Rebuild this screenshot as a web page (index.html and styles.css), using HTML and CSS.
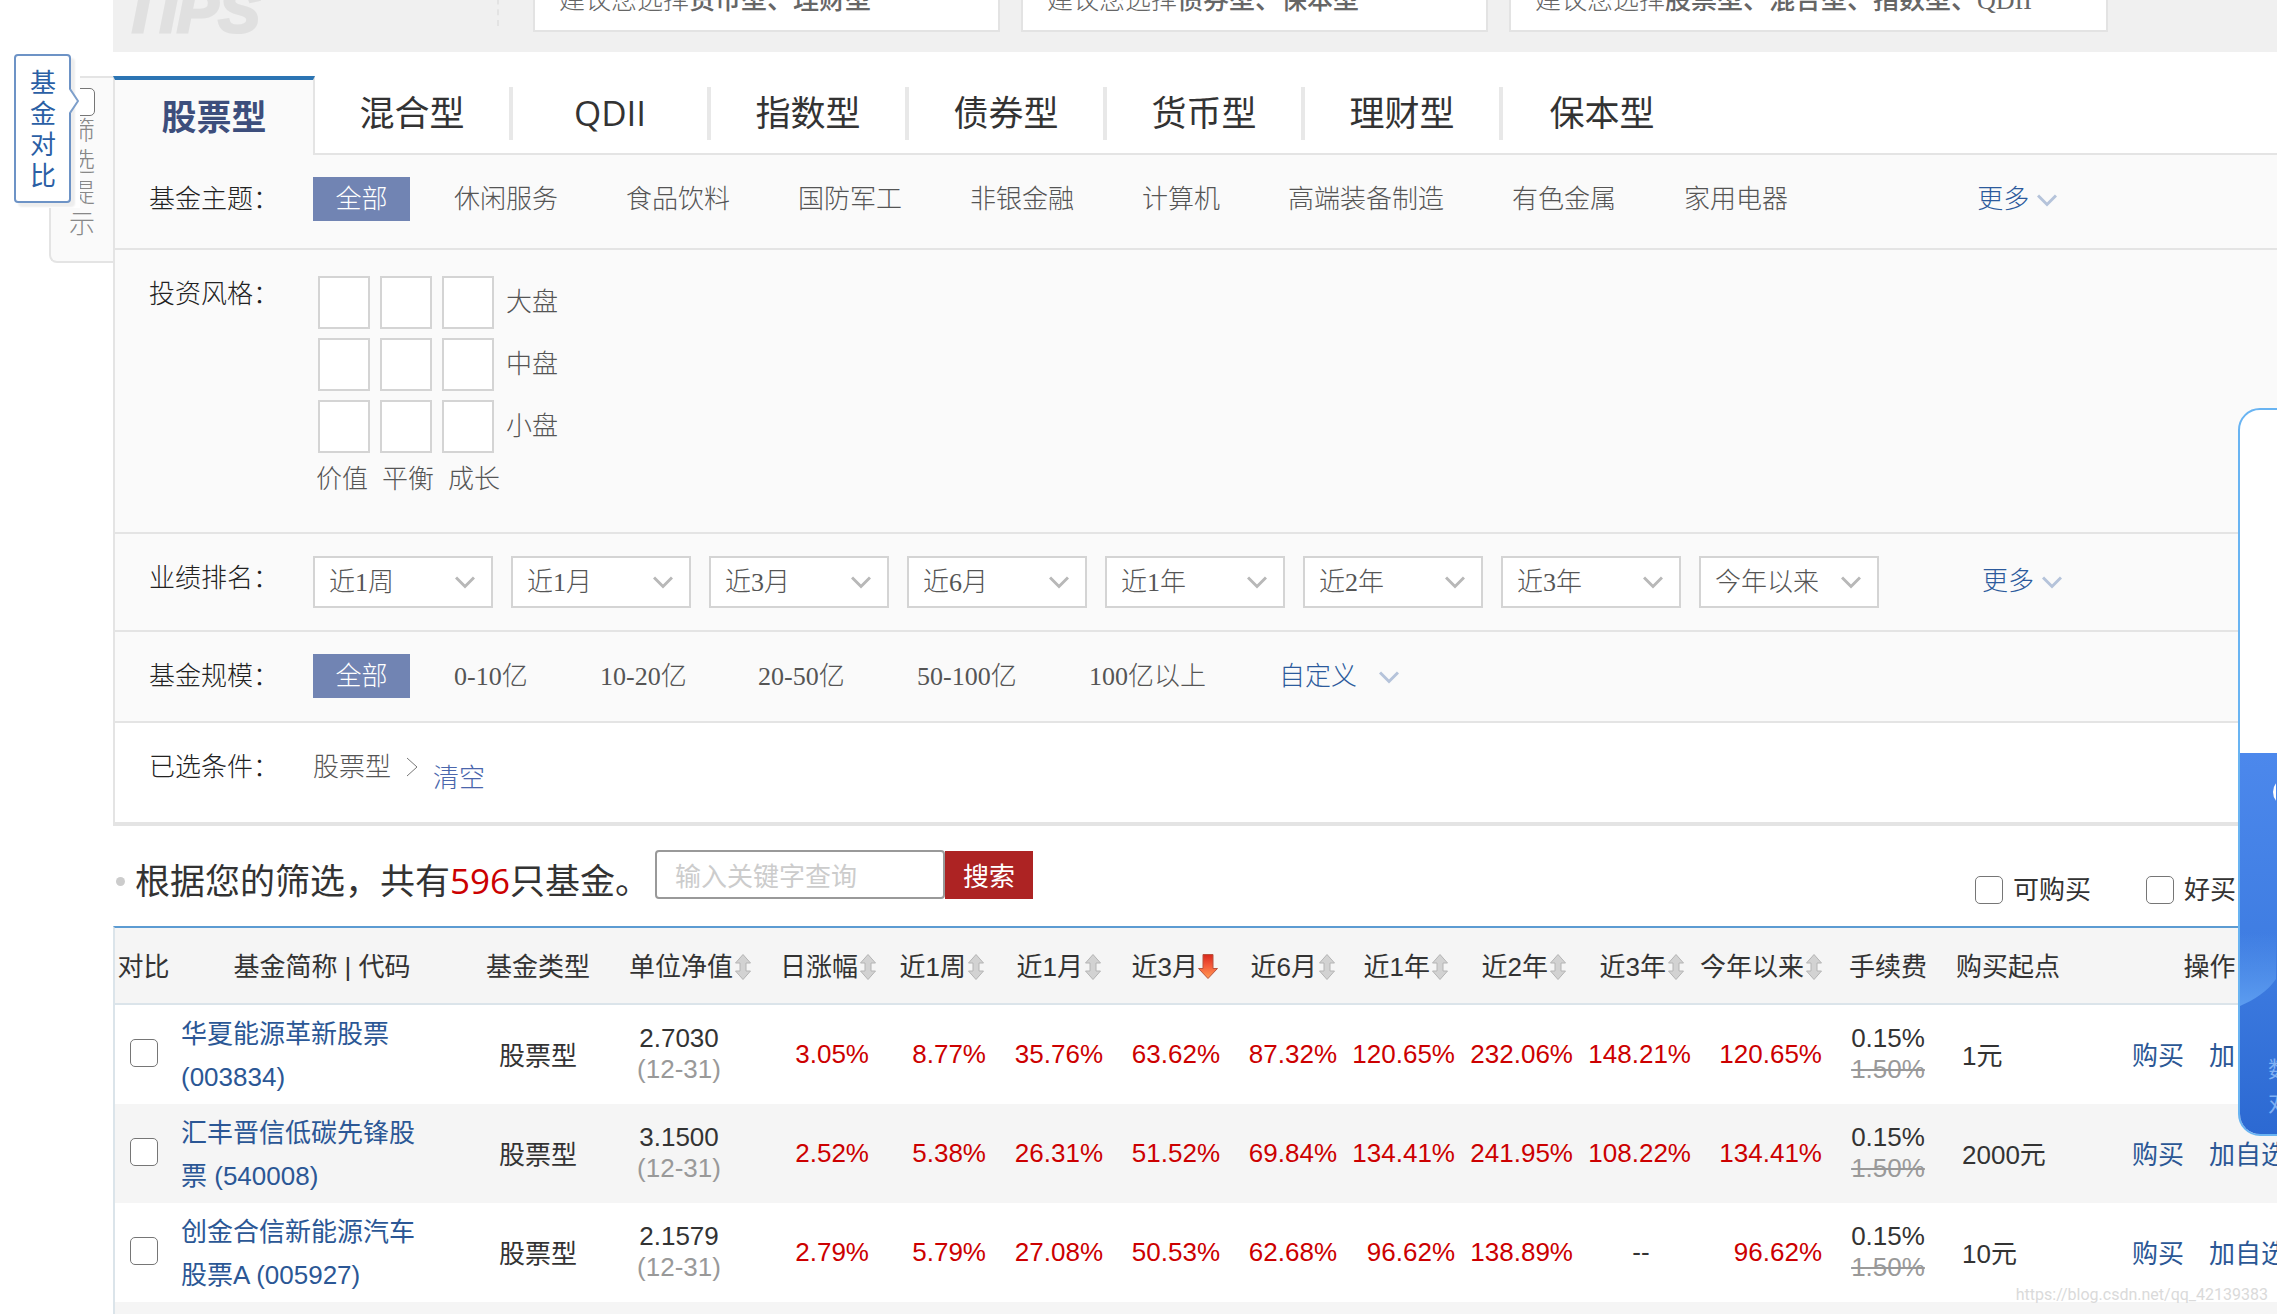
FILE: index.html
```html
<!DOCTYPE html>
<html lang="zh-CN">
<head>
<meta charset="utf-8">
<title>基金筛选</title>
<link rel="stylesheet" href="styles.css">
</head>
<body>
<svg class="defs" aria-hidden="true">
  <defs>
    <symbol id="chev" viewBox="0 0 20 13"><path d="M1 1.5 10 10.5 19 1.5" fill="none" stroke="currentColor" stroke-width="3"/></symbol>
    <symbol id="sort" viewBox="0 0 16 26"><path d="M8 .5 15.5 9H11v8h4.500L8 25.500.5 17H5V9H.5Z" fill="#d2d2d2" stroke="#b4b4b4"/></symbol>
    <symbol id="down" viewBox="0 0 20 26"><path d="M5 .5h10v14h4.500L10 24.500.5 14.500H5Z" fill="url(#red)" stroke="#b9533f"/></symbol>
    <linearGradient id="red" x1="0" y1="0" x2="0" y2="1"><stop offset="0" stop-color="#d8281c"/><stop offset=".45" stop-color="#f4583a"/><stop offset="1" stop-color="#ff9a52"/></linearGradient>
  </defs>
</svg>

<main class="page">
  <section class="tips">
    <strong class="tips-logo">TIPS</strong>
    <div class="tips-cards">
      <p class="tip">建议您选择<b>货币型、理财型</b></p>
      <p class="tip">建议您选择<b>债券型、保本型</b></p>
      <p class="tip tip-wide">建议您选择<b>股票型、混合型、指数型、QDII</b></p>
    </div>
  </section>

  <nav class="tabs">
    <a class="tab active" href="#">股票型</a>
    <a class="tab" href="#">混合型</a>
    <a class="tab" href="#">QDII</a>
    <a class="tab" href="#">指数型</a>
    <a class="tab" href="#">债券型</a>
    <a class="tab" href="#">货币型</a>
    <a class="tab" href="#">理财型</a>
    <a class="tab" href="#">保本型</a>
  </nav>

  <section class="filters">
    <div class="row">
      <span class="label">基金主题：</span>
      <a class="pill" href="#">全部</a>
      <div class="options">
        <a href="#">休闲服务</a><a href="#">食品饮料</a><a href="#">国防军工</a><a href="#">非银金融</a><a href="#">计算机</a><a href="#">高端装备制造</a><a href="#">有色金属</a><a href="#">家用电器</a>
      </div>
      <a class="more more-theme" href="#">更多<svg class="chev"><use href="#chev"/></svg></a>
    </div>
    <div class="row row-style">
      <span class="label">投资风格：</span>
      <div class="style-box">
        <div class="style-grid">
          <input type="checkbox" aria-label="大盘价值"><input type="checkbox" aria-label="大盘平衡"><input type="checkbox" aria-label="大盘成长"><span>大盘</span>
          <input type="checkbox" aria-label="中盘价值"><input type="checkbox" aria-label="中盘平衡"><input type="checkbox" aria-label="中盘成长"><span>中盘</span>
          <input type="checkbox" aria-label="小盘价值"><input type="checkbox" aria-label="小盘平衡"><input type="checkbox" aria-label="小盘成长"><span>小盘</span>
        </div>
        <div class="style-cols"><span>价值</span><span>平衡</span><span>成长</span></div>
      </div>
    </div>
    <div class="row row-rank">
      <span class="label">业绩排名：</span>
      <div class="selects">
        <label class="select"><select aria-label="近1周排名"><option>近1周</option></select><svg class="chev"><use href="#chev"/></svg></label>
        <label class="select"><select aria-label="近1月排名"><option>近1月</option></select><svg class="chev"><use href="#chev"/></svg></label>
        <label class="select"><select aria-label="近3月排名"><option>近3月</option></select><svg class="chev"><use href="#chev"/></svg></label>
        <label class="select"><select aria-label="近6月排名"><option>近6月</option></select><svg class="chev"><use href="#chev"/></svg></label>
        <label class="select"><select aria-label="近1年排名"><option>近1年</option></select><svg class="chev"><use href="#chev"/></svg></label>
        <label class="select"><select aria-label="近2年排名"><option>近2年</option></select><svg class="chev"><use href="#chev"/></svg></label>
        <label class="select"><select aria-label="近3年排名"><option>近3年</option></select><svg class="chev"><use href="#chev"/></svg></label>
        <label class="select"><select aria-label="今年以来排名"><option>今年以来</option></select><svg class="chev"><use href="#chev"/></svg></label>
      </div>
      <a class="more more-rank" href="#">更多<svg class="chev"><use href="#chev"/></svg></a>
    </div>
    <div class="row row-size">
      <span class="label">基金规模：</span>
      <a class="pill" href="#">全部</a>
      <div class="sizes">
        <a href="#">0-10亿</a><a href="#">10-20亿</a><a href="#">20-50亿</a><a href="#">50-100亿</a><a href="#">100亿以上</a>
        <a class="more custom" href="#">自定义<svg class="chev"><use href="#chev"/></svg></a>
      </div>
    </div>
    <div class="row row-chosen">
      <span class="label">已选条件：</span>
      <span class="chosen">股票型</span>
      <svg class="crumb" viewBox="0 0 12 20"><path d="M1 1 11 10 1 19" fill="none" stroke="#777"/></svg>
      <a class="clear" href="#">清空</a>
    </div>
  </section>

  <section class="result-bar">
    <h2>根据您的筛选，共有<em>596</em>只基金。</h2>
    <form class="search">
      <input type="text" placeholder="输入关键字查询" aria-label="关键字">
      <button type="button">搜索</button>
    </form>
    <div class="checks">
      <label><input type="checkbox">可购买</label>
      <label><input type="checkbox">好买</label>
    </div>
  </section>

  <table class="funds">
    <colgroup>
      <col class="c-cmp"><col class="c-name"><col class="c-type"><col class="c-nav"><col class="c-day"><col class="c-pct"><col class="c-pct"><col class="c-pct"><col class="c-pct"><col class="c-year"><col class="c-year"><col class="c-year"><col class="c-ytd"><col class="c-fee"><col class="c-min"><col class="c-ops">
    </colgroup>
    <thead>
      <tr>
        <th>对比</th><th>基金简称 | 代码</th><th>基金类型</th>
        <th class="num">单位净值<svg class="sort"><use href="#sort"/></svg></th>
        <th class="num tight">日涨幅<svg class="sort"><use href="#sort"/></svg></th>
        <th class="num">近1周<svg class="sort"><use href="#sort"/></svg></th>
        <th class="num">近1月<svg class="sort"><use href="#sort"/></svg></th>
        <th class="num">近3月<svg class="sort down"><use href="#down"/></svg></th>
        <th class="num">近6月<svg class="sort"><use href="#sort"/></svg></th>
        <th class="num wide">近1年<svg class="sort"><use href="#sort"/></svg></th>
        <th class="num wide">近2年<svg class="sort"><use href="#sort"/></svg></th>
        <th class="num wide">近3年<svg class="sort"><use href="#sort"/></svg></th>
        <th class="num">今年以来<svg class="sort"><use href="#sort"/></svg></th>
        <th class="fee">手续费</th><th class="min">购买起点</th><th>操作</th>
      </tr>
    </thead>
    <tbody>
      <tr>
        <td><input type="checkbox" aria-label="对比 003834"></td>
        <td class="name"><a href="#">华夏能源革新股票 (003834)</a></td><td class="kind">股票型</td>
        <td class="two">2.7030<small>(12-31)</small></td>
        <td class="num">3.05%</td><td class="num">8.77%</td><td class="num">35.76%</td><td class="num">63.62%</td><td class="num">87.32%</td><td class="num">120.65%</td><td class="num">232.06%</td><td class="num">148.21%</td><td class="num">120.65%</td>
        <td class="two">0.15%<small><s>1.50%</s></small></td><td class="min">1元</td>
        <td class="ops"><a href="#">购买</a><a href="#">加自选</a></td>
      </tr>
      <tr>
        <td><input type="checkbox" aria-label="对比 540008"></td>
        <td class="name"><a href="#">汇丰晋信低碳先锋股票 (540008)</a></td><td class="kind">股票型</td>
        <td class="two">3.1500<small>(12-31)</small></td>
        <td class="num">2.52%</td><td class="num">5.38%</td><td class="num">26.31%</td><td class="num">51.52%</td><td class="num">69.84%</td><td class="num">134.41%</td><td class="num">241.95%</td><td class="num">108.22%</td><td class="num">134.41%</td>
        <td class="two">0.15%<small><s>1.50%</s></small></td><td class="min">2000元</td>
        <td class="ops"><a href="#">购买</a><a href="#">加自选</a></td>
      </tr>
      <tr>
        <td><input type="checkbox" aria-label="对比 005927"></td>
        <td class="name"><a href="#">创金合信新能源汽车股票A (005927)</a></td><td class="kind">股票型</td>
        <td class="two">2.1579<small>(12-31)</small></td>
        <td class="num">2.79%</td><td class="num">5.79%</td><td class="num">27.08%</td><td class="num">50.53%</td><td class="num">62.68%</td><td class="num">96.62%</td><td class="num">138.89%</td><td class="none">--</td><td class="num">96.62%</td>
        <td class="two">0.15%<small><s>1.50%</s></small></td><td class="min">10元</td>
        <td class="ops"><a href="#">购买</a><a href="#">加自选</a></td>
      </tr>
      <tr><td colspan="16"></td></tr>
    </tbody>
  </table>
</main>

<aside class="filter-tip">
  <input type="checkbox" id="tipbox">
  <label for="tipbox">筛选提示</label>
</aside>
<aside class="compare">
  <button type="button">基金对比</button>
  <svg class="compare-arrow" viewBox="0 0 10 24"><path d="M0 0 9 12 0 24Z" fill="#fff"/><path d="M1 0 9 12 1 24" fill="none" stroke="#7d9fcb" stroke-width="2"/></svg>
</aside>

<aside class="promo">
  <div class="promo-top"></div>
  <div class="promo-body">
    <svg viewBox="0 0 36 379" class="promo-art" aria-hidden="true">
      <defs><linearGradient id="swoosh" x1="0" y1="0" x2="0" y2="1"><stop offset="0" stop-color="#5c9cf0" stop-opacity="0"/><stop offset="1" stop-color="#5c9cf0"/></linearGradient></defs>
      <circle cx="47" cy="39" r="14" fill="#fff"/>
      <path d="M0 180H36V226C28 238 14 247 0 253Z" fill="url(#swoosh)"/>
    </svg>
    <p>数据<br>对比</p>
  </div>
</aside>
<p class="watermark">https://blog.csdn.net/qq_42139383</p>
</body>
</html>
```

FILE: styles.css
```css
* { box-sizing: border-box; }
html, body { height: 100%; }
body {
  margin: 0;
  position: relative;
  overflow: hidden;
  background: #fff;
  color: #333;
  font: 26px/44px "Liberation Sans", "Noto Sans CJK SC", sans-serif;
}
a { color: inherit; text-decoration: none; }
p, h2 { margin: 0; }
.defs { position: absolute; width: 0; height: 0; }
.page { margin-left: 113px; min-width: 2186px; }

.tips {
  display: flex;
  align-items: flex-end;
  height: 52px;
  padding-bottom: 20px;
  overflow: hidden;
  background: #f0f0f0;
  font-family: "Liberation Serif", "Noto Sans CJK SC", serif;
  font-weight: 300;
  color: #666;
}
.tips-logo {
  width: 386px;
  height: 60px;
  padding-left: 9px;
  border-right: 2px dashed #e3e3e3;
  margin-bottom: 6px;
  font: italic bold 62px/90px "Liberation Sans", sans-serif;
  color: #e0e0e0;
  -webkit-text-stroke: 3px #e0e0e0;
}
.tips-cards { display: flex; gap: 21px; margin-left: 34px; }
.tip {
  width: 467px;
  height: 80px;
  padding: 25px 24px 0;
  border: 2px solid #e3e3e3;
  background: #fff;
  white-space: nowrap;
}
.tip-wide { width: 599px; }
.tip b { font-weight: 500; }

.tabs { display: flex; align-items: stretch; height: 103px; padding-top: 24px; border-bottom: 2px solid #e4e4e4; }
.tab {
  display: flex;
  align-items: center;
  justify-content: center;
  width: 198px;
  margin: 11px 0 13px;
  padding-bottom: 2px;
  border-right: 4px solid #e8e8e8;
  font: 35px/44px "Open Sans", "Noto Sans CJK SC", sans-serif;
}
.tab:last-child { border-right: 0; }
.tab.active {
  width: 202px;
  margin: 0 0 -2px;
  border: 2px solid #e4e4e4;
  border-top: 4px solid #2b74b3;
  border-bottom: 0;
  background: #fafafa;
  color: #3d4e7c;
  font-weight: 700;
}

.filters {
  border-left: 2px solid #e4e4e4;
  border-bottom: 2px solid #e4e4e4;
  background: #fafafa;
  font-family: "Liberation Serif", "Noto Sans CJK SC", serif;
  font-weight: 300;
  color: #555;
  line-height: 46px;
  white-space: nowrap;
}
.row { display: flex; align-items: flex-start; padding: 22px 0 25px 34px; border-bottom: 2px solid #e4e4e4; }
.row-style { padding-bottom: 29px; }
.row-rank { padding-bottom: 22px; }
.row-size { padding-bottom: 21px; }
.row-chosen { padding-bottom: 31px; background: #fff; }
.label { width: 164px; color: #222; }
.pill { width: 97px; height: 44px; margin-right: 44px; background: #7184b3; color: #fff; text-align: center; }
.options { display: flex; gap: 68px; }
.more { display: flex; align-items: center; gap: 8px; color: #2c5a9c; }
.more-theme { margin-left: 189px; }
.more-rank { margin-left: 103px; line-height: 54px; height: 52px; }
.chev { width: 20px; height: 13px; color: #b5c3da; }
.sizes { display: grid; grid-template-columns: 146px 158px 159px 172px 190px auto; }
.custom { gap: 22px; }

.style-box { padding-top: 4px; }
.style-grid { display: grid; grid-template-columns: repeat(3, 52px) auto; gap: 9px 10px; padding-left: 5px; }
.style-grid input { appearance: none; width: 52px; height: 53px; margin: 0; border: 2px solid #d4d4d4; background: #fff; }
.style-grid span { padding-left: 2px; line-height: 53px; }
.style-cols { display: flex; gap: 14px; padding: 4px 0 0 3px; }

.selects { display: flex; gap: 18px; }
.select { display: grid; align-items: center; width: 180px; }
.select > * { grid-area: 1 / 1; }
.select select {
  appearance: none;
  width: 100%;
  height: 52px;
  padding: 2px 14px 0;
  border: 2px solid #d4d4d4;
  border-radius: 0;
  background: #fff;
  font: inherit;
  color: inherit;
}
.select .chev { justify-self: end; margin-right: 18px; color: #b8b8b8; pointer-events: none; }

.crumb { width: 12px; height: 20px; margin: 12px 15px 0; }
.clear { padding-top: 11px; color: #4a66ac; height: 46px; }

.result-bar { display: flex; align-items: flex-start; height: 100px; padding: 24px 0 0 3px; white-space: nowrap; }
.result-bar h2 {
  display: flex;
  align-items: center;
  width: 539px;
  font: 35px/62px "Open Sans", "Noto Sans CJK SC", sans-serif;
}
.result-bar h2::before { content: ""; width: 9px; height: 9px; margin-right: 10px; border-radius: 50%; background: #ccc; }
.result-bar em { color: #c00; font-style: normal; }
.search { display: flex; align-items: flex-end; font-family: "Noto Sans CJK SC", sans-serif; }
.search input {
  width: 290px;
  height: 49px;
  padding: 0 18px;
  border: 2px solid #999;
  border-radius: 4px;
  font: inherit;
}
.search input::placeholder { color: #ccc; opacity: 1; }
.search button { width: 88px; height: 48px; padding: 0; border: 0; background: #ad2323; color: #fff; font: inherit; }
.checks { display: flex; gap: 55px; margin-left: 942px; line-height: 80px; }
.checks label { display: flex; align-items: center; gap: 10px; }

input[type="checkbox"] { flex: none; }
.checks input, .funds input, .filter-tip input {
  appearance: none;
  width: 28px;
  height: 28px;
  margin: 0;
  border: 1px solid #767676;
  border-radius: 5px;
  background: #fff;
  vertical-align: middle;
}
.funds input { margin-bottom: 4px; }

.funds {
  width: 100%;
  table-layout: fixed;
  border-collapse: separate;
  border-spacing: 0;
  border-left: 2px solid #dbe4ea;
  border-top: 2px solid #5c9bd2;
}
.c-cmp { width: 57px; }
.c-name { width: 300px; }
.c-type { width: 132px; }
.c-nav { width: 150px; }
.c-day { width: 124px; }
.c-pct { width: 117px; }
.c-year { width: 118px; }
.c-ytd { width: 131px; }
.c-fee { width: 114px; }
.c-min { width: 175px; }
.c-ops { width: auto; }
.funds th, .funds td { padding: 0; text-align: center; white-space: nowrap; }
.funds th { height: 77px; padding-top: 2px; background: #f5f5f5; border-bottom: 2px solid #dbe4ea; font-weight: 400; }
.funds td { height: 99px; line-height: 31px; }
.funds tbody tr:nth-child(even) { background: #f5f5f5; }
.funds .num { padding-right: 9px; text-align: right; }
.funds td.num { color: #c00; }
.funds th.num { padding-right: 11px; }
.funds th.num.tight { padding-right: 2px; }
.funds th.num.wide { padding-right: 16px; }
.funds th.num:nth-child(4) { padding-right: 3px; }
.funds .name { padding: 2px 45px 0 9px; text-align: left; white-space: normal; line-height: 43px; color: #2b5795; }
.funds td.kind, .funds td.min, .funds td.ops { padding-top: 3px; }
.funds td.two { padding-bottom: 2px; }
.funds small { display: block; font-size: inherit; color: #999; }
.funds .min { padding-left: 17px; text-align: left; }
.funds th.min { padding-left: 11px; }
.funds .ops { color: #2b5795; }
.ops a + a { margin-left: 25px; }
.sort { width: 16px; height: 26px; margin-left: 2px; vertical-align: -4px; }
.sort.down { width: 20px; margin-left: 0; }

.filter-tip {
  position: absolute;
  left: 49px;
  top: 76px;
  display: flex;
  flex-direction: column;
  align-items: flex-end;
  width: 64px;
  height: 187px;
  padding: 10px 18px 0 0;
  border: 2px solid #e4e4e4;
  border-right: 0;
  border-radius: 0 0 0 8px;
  background: #fafafa;
  color: #888;
  font-weight: 300;
}
.filter-tip label { width: 26px; line-height: 31px; }
.compare { position: absolute; left: 14px; top: 54px; width: 66px; height: 154px; background: #fff; }
.compare button {
  width: 57px;
  height: 149px;
  padding: 9px 14px 15px;
  border: 2px solid #6d93c6;
  border-radius: 4px;
  background: #fff;
  box-shadow: 4px 4px 2px #eee;
  color: #2b5fa5;
  font: 26px/31px "Noto Sans CJK SC", sans-serif;
  white-space: normal;
  word-break: break-all;
}
.compare-arrow { position: absolute; left: 55px; top: 35px; width: 10px; height: 24px; }

.promo {
  position: absolute;
  left: 2238px;
  right: -60px;
  top: 408px;
  height: 728px;
  border: 2px solid #69b4f2;
  border-radius: 22px;
  overflow: hidden;
  background: #fff;
}
.promo-top { height: 343px; }
.promo-body { position: relative; height: 381px; background: linear-gradient(#4c88ec, #3f7de2 50%, #2c69d2); }
.promo-art { display: block; width: 36px; height: 379px; }
.promo-body p { position: absolute; left: 28px; top: 300px; width: 60px; line-height: 34px; font-size: 22px; color: #7fb0f3; }
.watermark { position: absolute; right: 9px; bottom: 4px; font: 16px/30px "Noto Sans", sans-serif; font-family: Roboto, sans-serif; color: #dadada; }
```
